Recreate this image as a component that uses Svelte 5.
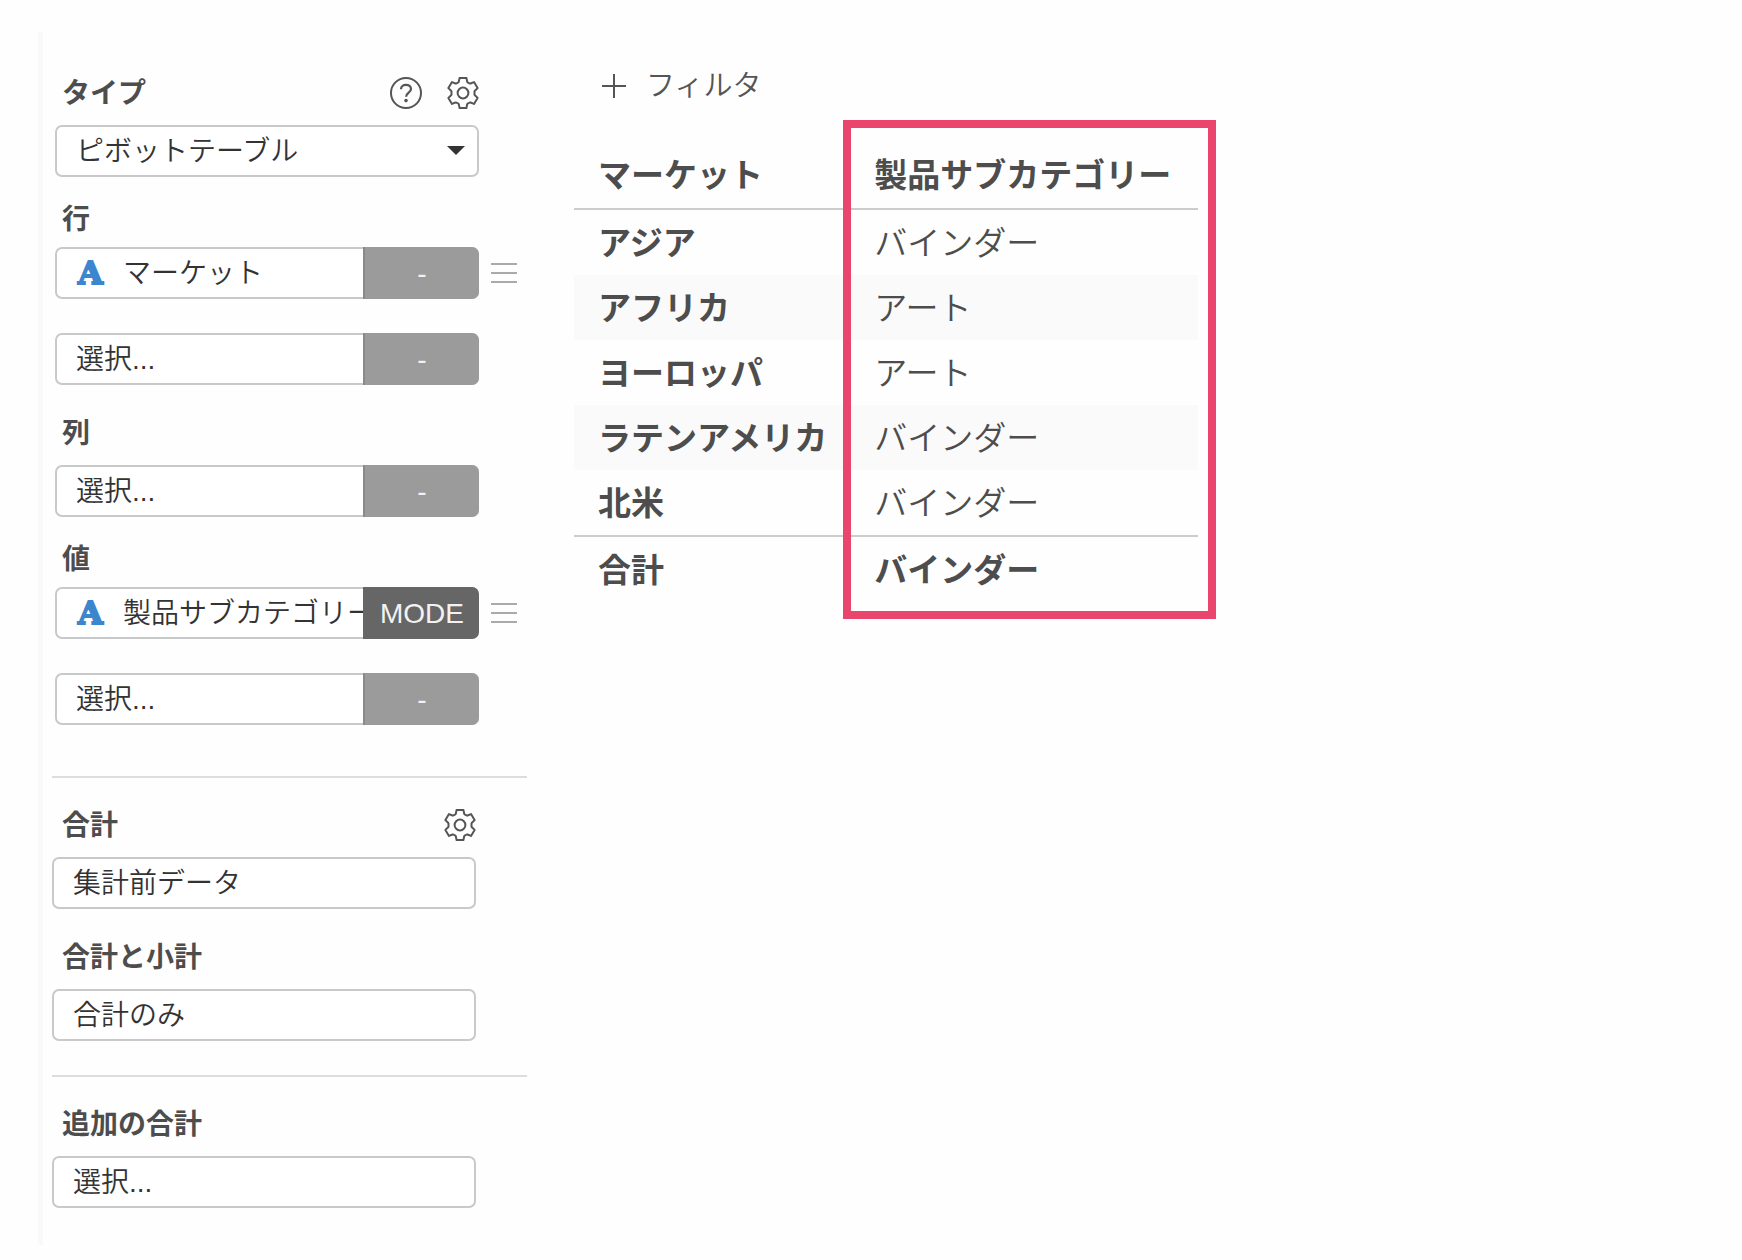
<script>
	const rowShelves = [
		{ id: "row-1", column: "マーケット", func: "-" },
		{ id: "row-2", column: "", func: "-" },
	];
	const columnShelves = [
		{ id: "column-1", column: "", func: "-" },
	];
	const valueShelves = [
		{ id: "value-1", column: "製品サブカテゴリー", func: "MODE" },
		{ id: "value-2", column: "", func: "-" },
	];

	const records = [
		{ market: "アジア", value: "バインダー" },
		{ market: "アフリカ", value: "アート" },
		{ market: "ヨーロッパ", value: "アート" },
		{ market: "ラテンアメリカ", value: "バインダー" },
		{ market: "北米", value: "バインダー" },
	];
</script>

{#snippet gear(label)}
	<button class="icon" aria-label={label}>
		<svg viewBox="0 0 32 32" width="32" height="32">
			<path d="M12.6 .9h6.8l.8 3.8q.1.5.7.8l1.6.9q.5.3 1 .1l3.5-1.4 3.6 6-2.7 2.6q-.4.4-.4.9v2.8q0 .5.4.9l2.7 2.6-3.6 6-3.5-1.4q-.5-.2-1 .1l-1.6.9q-.6.3-.7.8l-.8 3.8h-6.8l-.8-3.8q-.1-.5-.7-.8l-1.6-.9q-.5-.3-1-.1l-3.5 1.4-3.6-6 2.7-2.6q.4-.4.4-.9v-2.8q0-.5-.4-.9l-2.7-2.6 3.6-6 3.5 1.4q.5.2 1-.1l1.6-.9q.6-.3.7-.8z" />
			<circle cx="16" cy="16" r="5.4" />
		</svg>
	</button>
{/snippet}

{#snippet shelf(item, label)}
	<div class="shelf">
		<div class="split">
			{#if item.column}
				<span class="type" aria-hidden="true">A</span>
			{/if}
			<select id={item.id} aria-label={label}>
				<option>{item.column || "選択..."}</option>
			</select>
			<button class="func" class:active={item.func !== "-"}>{item.func}</button>
		</div>
		<div class="side">
			{#if item.column}
				<button class="icon" aria-label="メニュー">
					<svg viewBox="0 0 26 20" width="26" height="20" class="handle">
						<path d="M0 1h26M0 10h26M0 19h26" />
					</svg>
				</button>
			{/if}
		</div>
	</div>
{/snippet}

<div class="page">
	<aside>
		<section class="shelves">
			<div class="heading">
				<label for="type">タイプ</label>
				<div class="tools">
					<button class="icon" aria-label="ヘルプ">
						<svg viewBox="0 0 32 32" width="32" height="32">
							<circle cx="16" cy="16" r="15" />
							<path d="M11 12.2c0-2.6 2.1-4.4 5-4.4s5 1.7 5 4.2c0 3.6-4.9 3.6-4.9 7.7" stroke-width="2.2" />
							<circle class="dot" cx="16" cy="23.6" r="1.8" />
						</svg>
					</button>
					{@render gear("設定")}
				</div>
			</div>
			<div class="box chart">
				<select id="type">
					<option>ピボットテーブル</option>
				</select>
				<svg class="caret" viewBox="0 0 18 9" width="18" height="9">
					<path d="M0 0h18l-9 9z" />
				</svg>
			</div>

			<div class="group">
				<div class="heading tight"><label for="row-1">行</label></div>
				{#each rowShelves as item}
					{@render shelf(item, "行")}
				{/each}
			</div>
			<div class="group wide">
				<div class="heading"><label for="column-1">列</label></div>
				{#each columnShelves as item}
					{@render shelf(item, "列")}
				{/each}
			</div>
			<div class="group">
				<div class="heading tight"><label for="value-1">値</label></div>
				{#each valueShelves as item}
					{@render shelf(item, "値")}
				{/each}
			</div>
		</section>

		<section>
			<div class="heading">
				<label for="total">合計</label>
				<div class="tools">{@render gear("合計の設定")}</div>
			</div>
			<div class="box">
				<select id="total"><option>集計前データ</option></select>
			</div>
			<div class="group wide">
				<div class="heading"><label for="subtotal">合計と小計</label></div>
				<div class="box">
					<select id="subtotal"><option>合計のみ</option></select>
				</div>
			</div>
		</section>

		<section>
			<div class="heading"><label for="extra">追加の合計</label></div>
			<div class="box">
				<select id="extra"><option>選択...</option></select>
			</div>
		</section>
	</aside>

	<main>
		<button class="filter">
			<svg viewBox="0 0 24 24" width="24" height="24">
				<path d="M12 0v24M0 12h24" />
			</svg>
			フィルタ
		</button>
		<div class="pivot">
			<table>
				<thead>
					<tr>
						<th>マーケット</th>
						<th>製品サブカテゴリー</th>
					</tr>
				</thead>
				<tbody>
					{#each records as record}
						<tr>
							<th>{record.market}</th>
							<td>{record.value}</td>
						</tr>
					{/each}
				</tbody>
				<tfoot>
					<tr>
						<th>合計</th>
						<th>バインダー</th>
					</tr>
				</tfoot>
			</table>
			<div class="highlight"></div>
		</div>
	</main>
</div>

<style>
	:global(body) {
		background: #fefefe;
	}
	.page {
		display: flex;
		align-items: flex-start;
		padding: 32px 38px 0;
		color: #4d4d4d;
		font-family: "Liberation Sans", "Noto Sans CJK JP", sans-serif;
		font-size: 28px;
		font-weight: 350;
		line-height: 40px;
	}
	button, select {
		margin: 0;
		padding: 0;
		border: none;
		border-radius: 0;
		background: none;
		color: inherit;
		font: inherit;
	}
	svg {
		display: block;
		fill: none;
		stroke: #555;
		stroke-width: 2;
		stroke-linejoin: round;
	}

	aside {
		box-sizing: border-box;
		flex: 0 0 489px;
		min-width: 0;
		padding-left: 9px;
		border-left: 5px solid #f9f9f9;
	}
	section {
		padding: 27px 51px 34px 0;
	}
	section.shelves {
		padding: 41px 48px 51px 3px;
	}
	section + section {
		border-top: 2px solid #ddd;
	}
	section:last-child {
		padding-bottom: 37px;
	}
	.group {
		margin-top: 22px;
	}
	.group.wide {
		margin-top: 28px;
	}
	.heading {
		display: flex;
		align-items: center;
		justify-content: space-between;
		height: 40px;
		margin-bottom: 12px;
		padding-left: 10px;
		font-weight: bold;
	}
	.shelves .heading {
		padding-left: 7px;
	}
	.heading.tight {
		margin-bottom: 8px;
	}
	label {
		padding-top: 2px;
	}
	.tools {
		display: flex;
		gap: 25px;
	}
	.icon {
		display: block;
	}
	.dot {
		fill: #555;
		stroke: none;
	}
	.box, .split {
		box-sizing: border-box;
		display: flex;
		align-items: center;
		height: 52px;
		border: 2px solid #c9c9c9;
		border-radius: 7px;
		background: #fff;
		color: #333;
	}
	select {
		appearance: none;
		box-sizing: border-box;
		flex: 1;
		min-width: 0;
		height: 100%;
		padding: 2px 0 0 19px;
	}
	.chart {
		position: relative;
	}
	.caret {
		position: absolute;
		right: 12px;
		top: 19px;
		fill: #333;
		stroke: none;
		pointer-events: none;
	}

	.shelf {
		display: flex;
		align-items: center;
		margin-right: -48px;
	}
	.shelf + .shelf {
		margin-top: 34px;
	}
	.split {
		flex: 1;
		min-width: 0;
		padding-right: 114px;
		position: relative;
	}
	.type {
		width: 26px;
		margin-left: 21px;
		color: #3b86cf;
		font: bold 32px/40px "DejaVu Serif", serif;
		-webkit-text-stroke: 2px #3b86cf;
	}
	.func {
		position: absolute;
		top: -2px;
		right: -2px;
		bottom: -2px;
		width: 116px;
		padding-top: 2px;
		border-left: 2px solid #8a8a8a;
		border-radius: 0 7px 7px 0;
		background: #9b9b9b;
		color: #f2f2f2;
	}
	.func.active {
		border-color: #666;
		background: #666;
	}
	.side {
		flex: 0 0 48px;
		padding-left: 12px;
		box-sizing: border-box;
	}
	.handle {
		stroke: #aaa;
	}

	main {
		flex: 1;
		margin-left: 47px;
		padding-top: 34px;
	}
	.filter {
		display: flex;
		align-items: center;
		gap: 20px;
		margin-left: 28px;
		color: #555;
		font-size: 29px;
	}
	.pivot {
		display: inline-block;
		margin-top: 36px;
		position: relative;
	}
	table {
		border-collapse: separate;
		border-spacing: 0;
		font-size: 33px;
	}
	th, td {
		box-sizing: border-box;
		height: 65px;
		padding: 2px 23px 0 24px;
		text-align: left;
	}
	th:last-child, td:last-child {
		padding-right: 27px;
	}
	thead th {
		height: 68px;
		border-bottom: 2px solid #ccc;
	}
	tfoot th {
		height: 68px;
		border-top: 2px solid #ccc;
	}
	tbody tr:nth-child(even) {
		background: #fafafa;
	}
	.highlight {
		position: absolute;
		top: -22px;
		right: -18px;
		bottom: -16px;
		left: 269px;
		border: 8px solid #e9456d;
		pointer-events: none;
	}
</style>
